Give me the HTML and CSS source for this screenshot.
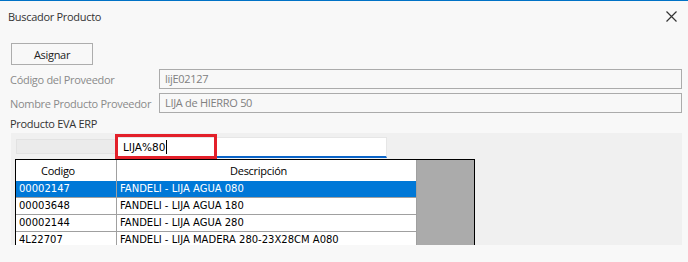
FILE: index.html
```html
<!DOCTYPE html>
<html lang="es">
<head>
<meta charset="UTF-8">
<title>Buscador Producto</title>
<link rel="stylesheet" href="styles.css">
</head>
<body>

<div class="window">
  <!-- Barra de título -->
  <div class="titlebar">
    <span class="title">Buscador Producto</span>
    <svg class="close" width="11" height="11" viewBox="0 0 11 11">
      <path d="M0.5 0.5 L10.5 10.5 M10.5 0.5 L0.5 10.5" stroke="#333" stroke-width="1.2" fill="none"/>
    </svg>
  </div>

  <button class="btn">Asignar</button>

  <div class="field">
    <label>Código del Proveedor</label>
    <div class="input">lijE02127</div>
  </div>
  <div class="field">
    <label>Nombre Producto Proveedor</label>
    <div class="input">LIJA de HIERRO 50</div>
  </div>

  <div class="section-label">Producto EVA ERP</div>

  <div class="panel">
    <div class="search-row">
      <div class="search-head"></div>
      <div class="search-box">LIJA%80<span class="caret"></span></div>
      <div class="highlight"></div>
    </div>

    <div class="grid">
      <div class="table">
        <div class="row head">
          <div class="cell c1">Codigo</div>
          <div class="cell c2">Descripción</div>
        </div>
        <div class="row selected">
          <div class="cell c1">00002147</div>
          <div class="cell c2">FANDELI - LIJA AGUA 080</div>
        </div>
        <div class="row">
          <div class="cell c1">00003648</div>
          <div class="cell c2">FANDELI - LIJA AGUA 180</div>
        </div>
        <div class="row">
          <div class="cell c1">00002144</div>
          <div class="cell c2">FANDELI - LIJA AGUA 280</div>
        </div>
        <div class="row">
          <div class="cell c1">4L22707</div>
          <div class="cell c2">FANDELI - LIJA MADERA 280-23X28CM A080</div>
        </div>
      </div>
      <div class="filler"></div>
    </div>
  </div>
</div>

</body>
</html>
```

FILE: styles.css
```css
body {
  margin: 0;
  padding: 0;
  background-color: #f8f8f8;
  font-family: "Open Sans", "Noto Sans", sans-serif;
  font-size: 11px;
  letter-spacing: -0.3px;
  color: #333;
}
.window {
  border-top: 1px solid #0072c6;
  height: 261px;
  overflow: hidden;
}
.titlebar {
  display: flex;
  justify-content: space-between;
  align-items: center;
  height: 31px;
  padding: 0 11px 0 8px;
}
.title {
  color: #333;
}
.btn {
  display: block;
  margin: 11px 0 4px 11px;
  width: 82px;
  height: 22px;
  background-color: #f8f8f8;
  border: 1px solid #adadad;
  font-family: inherit;
  font-size: 11px;
  letter-spacing: -0.3px;
  color: #222;
  padding: 0;
}
.field {
  display: flex;
  align-items: center;
  margin-bottom: 4px;
}
.field label {
  flex: none;
  width: 149px;
  padding-left: 10px;
  white-space: nowrap;
  color: #8a8a8a;
}
.input {
  width: 516px;
  height: 18px;
  line-height: 18px;
  border: 1px solid #ababab;
  padding-left: 5px;
  color: #808080;
}
.section-label {
  padding-left: 10px;
  height: 16px;
  line-height: 14px;
  margin-top: 2px;
  color: #333;
}
.panel {
  margin: 0 6px 0 11px;
  height: 112px;
  background-color: #f0f0f0;
  overflow: hidden;
}
.search-row {
  position: relative;
  display: flex;
  align-items: flex-start;
  height: 26px;
  padding: 4px 0 0 5px;
  box-sizing: border-box;
}
.search-head {
  width: 98px;
  height: 13px;
  margin-top: 2px;
  background-color: #ebebeb;
  border: 1px solid #e2e2e2;
}
.search-box {
  width: 263px;
  height: 18px;
  line-height: 18px;
  padding-left: 6px;
  background-color: #fff;
  border: 1px solid #e6e6e6;
  border-bottom: 2px solid #0a64c8;
  font-family: "DejaVu Sans", sans-serif;
  font-size: 10.5px;
  letter-spacing: 0;
  color: #000;
}
.caret {
  display: inline-block;
  width: 1px;
  height: 14px;
  background-color: #000;
  vertical-align: -3px;
  margin-left: 1px;
}
.highlight {
  position: absolute;
  left: 104px;
  top: 1px;
  width: 96px;
  height: 19px;
  border: 3px solid #e3202a;
}
.grid {
  display: flex;
  margin-left: 4px;
  width: 458px;
  height: 86px;
  border: 1px solid #000;
  border-bottom: none;
  background-color: #fff;
}
.table {
  width: 400px;
  border-right: 1px solid #a0a0a0;
}
.filler {
  flex: 1;
  background-color: #ababab;
}
.row {
  display: flex;
  height: 16px;
  border-bottom: 1px solid #a0a0a0;
  font-family: "DejaVu Sans", sans-serif;
  font-size: 10px;
  letter-spacing: 0;
  line-height: 16px;
  color: #000;
}
.row.head {
  height: 21px;
  line-height: 21px;
  border-bottom: none;
  background-color: #fff;
  font-family: "Open Sans", sans-serif;
  font-size: 11px;
  letter-spacing: -0.3px;
}
.row.selected {
  background-color: #0078d7;
  color: #fff;
}
.cell {
  box-sizing: border-box;
  padding-left: 3px;
  white-space: nowrap;
  overflow: hidden;
}
.c1 {
  width: 101px;
  border-right: 1px solid #a0a0a0;
}
.c2 {
  flex: 1;
}
.head .cell {
  text-align: center;
  padding: 0 16px 0 0;
}
```
